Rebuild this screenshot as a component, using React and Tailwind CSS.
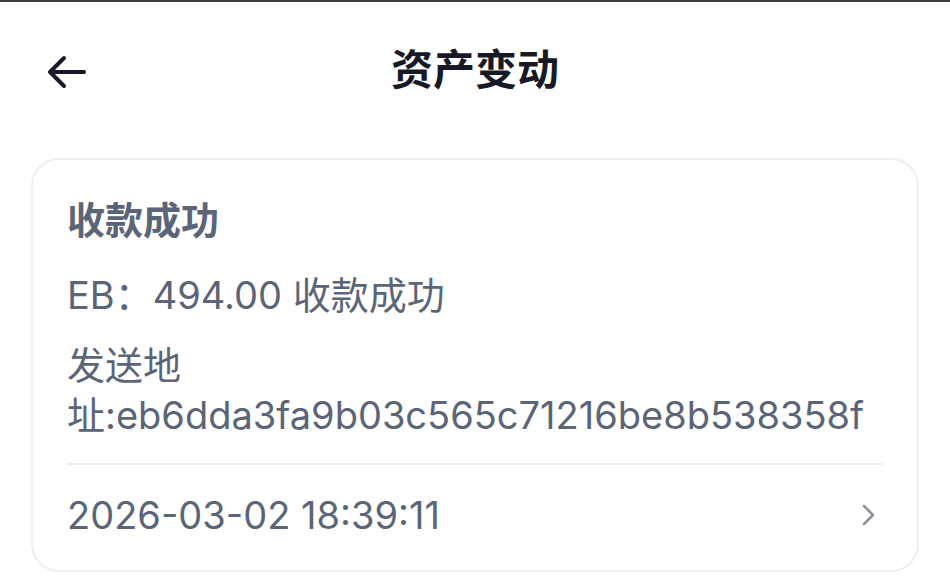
import React from 'react';

const font = { fontFamily: 'Inter, "Noto Sans CJK SC", sans-serif' };

const BackArrow = () => (
  <svg width="40" height="34" viewBox="0 0 40 34" fill="none" stroke="#171a26" strokeWidth="4" strokeLinecap="round" strokeLinejoin="round">
    <path d="M37 17H4" />
    <path d="M17 3L3 17l14 14" />
  </svg>
);

const Chevron = () => (
  <svg width="16" height="24" viewBox="0 0 16 24" fill="none" stroke="#8c9099" strokeWidth="2.5" strokeLinecap="round" strokeLinejoin="round">
    <path d="M3 3l9 9-9 9" />
  </svg>
);

export default function App() {
  return (
    <div className="w-[950px] h-[577px] overflow-hidden bg-white border-t-2 border-[#3d3d3d]" style={font}>
      {/* Header */}
      <div className="relative h-[142px] flex items-center justify-center -mt-[2px]">
        <div className="absolute left-[47px] top-[55px]">
          <BackArrow />
        </div>
        <h1 className="text-[42px] font-bold text-[#171a26] leading-none -mt-[2px]">资产变动</h1>
      </div>

      {/* Card */}
      <div className="mx-[31px] mt-[16px] rounded-[28px] border-2 border-[#eceef1] px-[34px] pt-[35px] pb-[30px] text-[#5b6578]">
        <div className="text-[38px] leading-[50px] font-bold">收款成功</div>
        <div className="mt-[25px] text-[38px] leading-[50px]">EB：494.00 收款成功</div>
        <div className="mt-[20px] text-[38px] leading-[50px]">发送地址:eb6dda3fa9b03c565c71216be8b538358f</div>
        <div className="mt-[23px] h-[2px] bg-[#eeeff2]" />
        <div className="mt-[25px] flex items-center justify-between">
          <span className="text-[38px] leading-[50px]">2026-03-02 18:39:11</span>
          <span className="mr-[6px]"><Chevron /></span>
        </div>
      </div>
    </div>
  );
}
